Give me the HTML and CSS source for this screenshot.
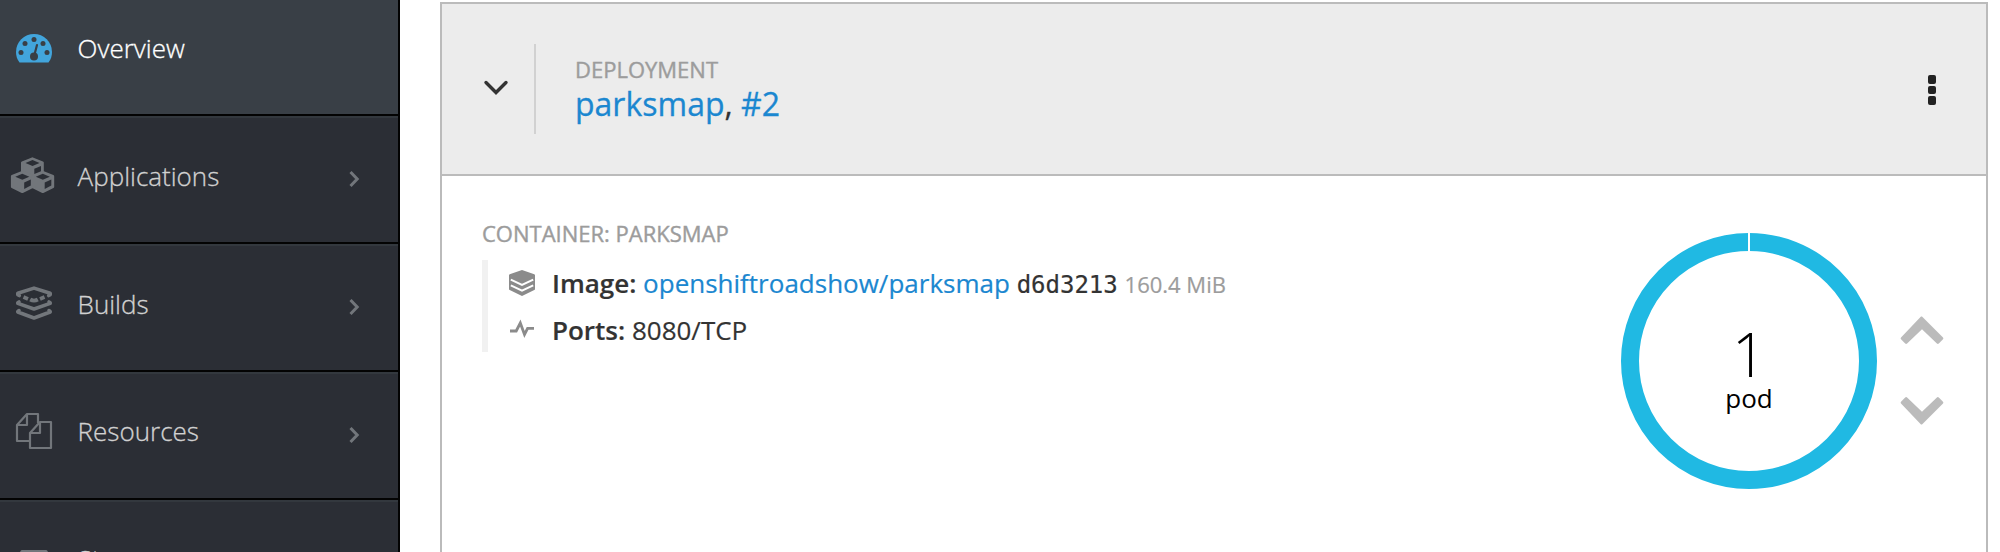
FILE: index.html
```html
<!DOCTYPE html>
<html lang="en">
<head>
<meta charset="utf-8">
<title>Overview</title>
<link rel="stylesheet" href="styles.css">
</head>
<body>
<div class="app">
  <nav class="sidebar">
    <a class="item active">
      <svg class="icon" viewBox="0 0 44 44"><g transform="translate(0 -1.500)"><path fill="#42a5dc" d="M7.500 37C5 33.400 4 30.400 4 26.400a18 18 0 0 1 36 0c0 4-1 7-3.500 10.600z"/><g fill="#393f46"><circle cx="9" cy="27" r="2.500"/><circle cx="13" cy="18" r="2.500"/><circle cx="22" cy="14" r="2.500"/><circle cx="31" cy="18" r="2.500"/><circle cx="35" cy="27" r="2.500"/><circle cx="22" cy="31" r="4"/></g><path d="M22.500 29 25 19.500" stroke="#393f46" stroke-width="2.200" stroke-linecap="round"/></g></svg>
      <span class="label">Overview</span>
    </a>
    <a class="item">
      <svg class="icon" viewBox="0 0 44 44"><g transform="translate(0 -1.500)"><g fill="#72767b" stroke="#72767b" stroke-width="2.600" stroke-linejoin="round"><path d="M10.300 9.100 20.400 5.100l10.100 4v8.500l-10.100 5-10.100-5z"/><path d="M.2 22.800 10.300 18.800l10.100 4v10.500l-10.100 5-10.100-5z"/><path d="M20.700 22.800 30.800 18.800l10.100 4v10.500l-10.100 5-10.100-5z"/></g><g fill="#2b2e35"><path d="m13.500 9.500 7-2.900 7 2.900-7 3z"/><path d="m22.300 15.300 6.700-2.900v5.300l-6.700 2.800z"/><path d="m3.300 23.200 7-2.900 7 2.900-7 3z"/><path d="m12.200 29 6.600-2.900v5.900l-6.600 3.400z"/><path d="m23.800 23.200 7-2.900 7 2.900-7 3z"/><path d="m32.700 29 6.600-2.900v5.900l-6.600 3.400z"/></g></g></svg>
      <span class="label">Applications</span>
      <svg class="chev" viewBox="0 0 14 20"><path d="M3.500 3 10.200 10 3.500 17"/></svg>
    </a>
    <a class="item">
      <svg class="icon" viewBox="0 0 44 44"><g fill="none" stroke="#72767b" stroke-width="3.600" stroke-linecap="round" stroke-linejoin="round"><path d="M7.300 12.500 5.800 11.600v-1.400L22 5.100l16.200 5.100v1.400L36.700 12.500"/><path stroke-width="3.800" stroke-linecap="butt" d="m11.500 14 4.500 1.900m2.200.6q3.800 2.200 7.600 0m2.200-.6 4.500-1.900"/><path d="M7 19 5.800 19.800v.6L22 26l16.200-5.600v-.6L37 19"/><path d="M7 27.600 5.800 28.400v.6L22 35l16.200-6v-.6l-1.200-.8"/></g></svg>
      <span class="label">Builds</span>
      <svg class="chev" viewBox="0 0 14 20"><path d="M3.500 3 10.200 10 3.500 17"/></svg>
    </a>
    <a class="item">
      <svg class="icon" viewBox="0 0 44 44"><g transform="translate(0 -2)" fill="none" stroke="#72767b" stroke-width="2.200" stroke-linejoin="round"><path d="M17 32H5V16L15 5h11v9"/><path d="M5 16h10V5"/><path d="M28 13h11v26H18V24z"/><path d="M18 24h10V13"/></g></svg>
      <span class="label">Resources</span>
      <svg class="chev" viewBox="0 0 14 20"><path d="M3.500 3 10.200 10 3.500 17"/></svg>
    </a>
    <a class="item">
      <svg class="icon" viewBox="0 0 44 44"><path fill="none" stroke="#72767b" stroke-width="3" stroke-linejoin="round" d="M5 22 10 12.500h24L39 22v10H5z"/></svg>
      <span class="label">Storage</span>
      <svg class="chev" viewBox="0 0 14 20"><path d="M3.500 3 10.200 10 3.500 17"/></svg>
    </a>
  </nav>
  <main class="card">
    <header class="head">
      <svg class="toggle" viewBox="0 0 28 20"><path d="m4 3.500 10 10 10-10"/></svg>
      <div class="titles">
        <div class="kicker">DEPLOYMENT</div>
        <div class="title"><a>parksmap</a>, <a>#2</a></div>
      </div>
      <div class="kebab"><i></i><i></i><i></i></div>
    </header>
    <section class="body">
      <div class="container">
        <div class="kicker">CONTAINER: PARKSMAP</div>
        <div class="rows">
          <div class="row">
            <svg class="mini" viewBox="0 0 26 26"><path fill="#8b8b8b" d="M13 0 25.300 4.200q.7.300.7 1V19q0 .8-.7 1.100L13 26 .7 20.100Q0 19.800 0 19V5.200q0-.7.700-1z"/><path fill="none" stroke="#fff" stroke-width="2" d="m1.800 9.600 11.200 5.200 11.200-5.200M1.800 15.400 13 20.600l11.200-5.200"/></svg>
            <span class="text"><b>Image:</b> <a>openshiftroadshow/parksmap</a> <code>d6d3213</code> <small>160.4 MiB</small></span>
          </div>
          <div class="row">
            <svg class="mini" viewBox="0 0 26 26"><path fill="none" stroke="#8b8b8b" stroke-width="2.800" d="M1 15h6.200L11.300 7l4.200 11.500L18.600 12.300H25"/></svg>
            <span class="text"><b>Ports:</b> 8080/TCP</span>
          </div>
        </div>
      </div>
      <svg class="donut" viewBox="0 0 256 256">
        <circle cx="128" cy="128" r="119" fill="none" stroke="#20b9e3" stroke-width="18"/>
        <path d="M127 0h2v19h-2z" fill="#fff"/>
        <text class="count" x="128" y="144">1</text>
        <text class="unit" x="128" y="175">pod</text>
      </svg>
      <div class="scale">
        <svg viewBox="0 0 44 28"><path d="M22 .5 43 21.500q.8.900 0 1.800l-4.200 4.200q-1 .8-1.900 0L22 13.200 7.100 27.500q-.9.800-1.900 0L1 23.300q-.8-.9 0-1.800L21 .5z"/></svg>
        <svg viewBox="0 0 44 28"><path d="M22 27.500 43 6.500q.8-.9 0-1.800L38.800.5q-1-.8-1.900 0L22 14.800 7.100.5Q6.200-.3 5.200.5L1 4.700q-.8.900 0 1.800l20 21z"/></svg>
      </div>
    </section>
  </main>
</div>
</body>
</html>
```

FILE: styles.css
```css
* { box-sizing: border-box; }
body { margin: 0; background: #fff; font-family: "Open Sans", sans-serif; color: #333; overflow: hidden; }
svg { display: block; flex: none; overflow: visible; }
a { color: #1b87d0; }
.app { display: flex; height: 552px; overflow: hidden; }

.sidebar { width: 400px; height: 552px; flex: none; overflow: hidden; background: #2b2e35; border-right: 2px solid #030303; }
.item { display: flex; align-items: flex-start; height: 128px; padding: 37px 37px 0 12px; border-top: 2px solid #33383e; border-bottom: 2px solid #030303; color: #d1d1d1; }
.item.active { height: 116px; padding-top: 27px; border-top: 0; background: #393f46; color: #fff; }
.icon { width: 44px; height: 44px; }
.label { flex: 1; margin-left: 21.600px; font-size: 26px; font-weight: 300; line-height: 42px; white-space: nowrap; -webkit-text-stroke: 0.3px currentColor; }
.item:nth-child(n+4) .label { margin-top: -1px; }
.chev { width: 14px; height: 20px; margin-top: 14px; fill: none; stroke: #72767b; stroke-width: 3; }

.card { width: 1548px; height: 700px; margin: 2px 0 0 40px; flex: none; border: 2px solid #bbb; }
.head { display: flex; align-items: center; height: 172px; padding: 0 50px 0 40px; background: #ececec; border-bottom: 2px solid #bbb; }
.toggle { width: 28px; height: 20px; fill: none; stroke: #333; stroke-width: 3.4; stroke-linecap: round; }
.titles { flex: 1; height: 90px; margin-left: 24px; padding: 11px 0 0 39px; border-left: 2px solid #d1d1d1; }
.kicker { font-size: 22px; line-height: 28px; color: #9c9c9c; white-space: nowrap; -webkit-text-stroke: 0.4px currentColor; }
.title { margin-top: 1px; font-size: 32px; line-height: 40px; -webkit-text-stroke: 0.3px currentColor; }
.kebab { display: flex; flex-direction: column; gap: 2px; padding-top: 2px; }
.kebab i { width: 8px; height: 8.400px; border-radius: 2px; background: #222; }

.body { display: flex; align-items: flex-start; padding: 43px 40px 0; }
.container { flex: 1; }
.rows { margin-top: 13px; border-left: 6px solid #f1f1f1; }
.row { display: flex; align-items: center; height: 46px; padding-left: 21px; gap: 17px; font-size: 26px; line-height: 46px; white-space: nowrap; }
.text { padding-top: 2px; -webkit-text-stroke: 0.2px currentColor; }
.mini { width: 26px; height: 26px; }
b { font-weight: 600; }
code { font-family: "DejaVu Sans Mono", monospace; font-size: 24px; }
small { font-size: 22px; color: #9c9c9c; }
.donut { width: 256px; height: 256px; margin-top: 14px; }
.donut text { text-anchor: middle; fill: #000; }
.count { font-size: 60px; font-weight: 300; }
.unit { font-size: 26px; }
.scale { display: flex; flex-direction: column; gap: 53px; margin: 97px 2px 0 23px; fill: #bbb; }
.scale svg { width: 44px; height: 28px; }
```
